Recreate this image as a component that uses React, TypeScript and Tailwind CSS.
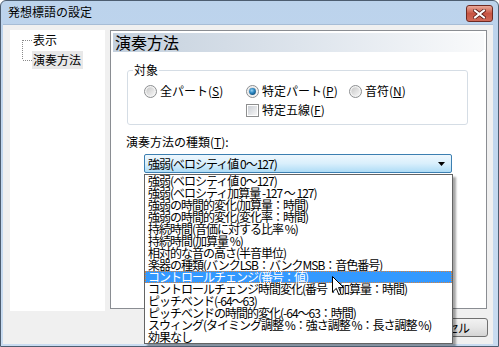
import React from "react";

const items = [
  "強弱(ベロシティ値 0〜127)",
  "強弱(ベロシティ加算量 -127 〜 127)",
  "強弱の時間的変化(加算量：時間)",
  "強弱の時間的変化(変化率：時間)",
  "持続時間(音価に対する比率 %)",
  "持続時間(加算量 %)",
  "相対的な音の高さ(半音単位)",
  "楽器の種類(バンクLSB：バンクMSB：音色番号)",
  "コントロールチェンジ(番号：値)",
  "コントロールチェンジ時間変化(番号：加算量：時間)",
  "ピッチベンド(-64〜63)",
  "ピッチベンドの時間的変化(-64〜63：時間)",
  "スウィング(タイミング調整 %：強さ調整 %：長さ調整 %)",
  "効果なし",
];

function Radio({ checked, id }: { checked?: boolean; id: string }) {
  return (
    <svg width="13" height="13" viewBox="0 0 13 13" className="shrink-0">
      <defs>
        <linearGradient id={id} x1="0" y1="0" x2="1" y2="1">
          <stop offset="0" stopColor="#c8c8c8" />
          <stop offset="1" stopColor="#f6f6f6" />
        </linearGradient>
        <radialGradient id={id + "b"} cx="0.4" cy="0.35" r="0.7">
          <stop offset="0" stopColor="#9ad4f5" />
          <stop offset="0.5" stopColor="#2e8ac4" />
          <stop offset="1" stopColor="#104e7c" />
        </radialGradient>
      </defs>
      <circle cx="6.5" cy="6.5" r="6" fill="#f3f3f3" stroke="#8c8e90" />
      <circle cx="6.5" cy="6.5" r="4.2" fill={`url(#${id})`} />
      {checked && <circle cx="6.5" cy="6.5" r="3.4" fill={`url(#${id}b)`} />}
    </svg>
  );
}

function Checkbox() {
  return (
    <div className="flex h-[13px] w-[13px] shrink-0 items-center justify-center border border-[#8e8f8f] bg-white">
      <div className="h-[9px] w-[9px] bg-gradient-to-br from-[#cbcfd5] to-[#f6f6f6]" />
    </div>
  );
}

function TreeLine({ first }: { first?: boolean }) {
  return (
    <svg width="10" height="20" viewBox="0 0 10 20" className="shrink-0">
      <g stroke="#8a8a8a" strokeDasharray="1 1">
        {first ? (
          <line x1="0.5" y1="10" x2="0.5" y2="20" />
        ) : (
          <line x1="0.5" y1="0" x2="0.5" y2="10" />
        )}
        <line x1="1" y1="10.5" x2="10" y2="10.5" />
      </g>
    </svg>
  );
}

export default function App() {
  return (
    <div className="relative flex h-[347px] w-[499px] flex-col overflow-hidden rounded-t-[6px] border border-[#4d5d70] bg-gradient-to-b from-[#bcd3ec] to-[#c9dcf1] font-['Noto_Sans_CJK_JP','Liberation_Sans',sans-serif] text-[12px] text-black">
      {/* title bar */}
      <div className="flex h-[23px] shrink-0 items-start justify-between pl-[7px] pr-[5px]">
        <span className="mt-[4px] leading-[14px]">発想標語の設定</span>
        <div className="mt-[4px] flex h-[17px] w-[27px] items-center justify-center rounded-[3px] border border-[#6e2a22] bg-gradient-to-b from-[#e9a99b] via-[#c75442] to-[#d06a58]">
          <svg width="13" height="10" viewBox="0 0 13 10">
            <g strokeLinecap="square">
              <path d="M2 1.5 L11 8.5 M11 1.5 L2 8.5" stroke="#5b1d16" strokeWidth="3.6" />
              <path d="M2 1.5 L11 8.5 M11 1.5 L2 8.5" stroke="#ffffff" strokeWidth="2" />
            </g>
          </svg>
        </div>
      </div>

      {/* client area */}
      <div className="ml-[2px] mr-[5px] flex h-[320px] flex-col border-t border-[#a7bdd6] bg-[#f0f0f0] pl-[7px] pt-[5px]">
        <div className="flex items-start gap-[5px]">
          {/* tree */}
          <div className="flex h-[281px] w-[95px] flex-col bg-white pl-[12px]">
            <div className="flex h-[20px] items-center">
              <TreeLine first />
              <span className="ml-[1px] leading-[14px]">表示</span>
            </div>
            <div className="flex h-[20px] items-center">
              <TreeLine />
              <span className="flex h-[18px] items-center bg-[#e8e8e8] pl-[1px] pr-[2px] leading-[14px]">
                演奏方法
              </span>
            </div>
          </div>

          {/* right panel */}
          <div className="flex h-[279px] w-[377px] flex-col border border-[#8a8d92] bg-white p-[2px]">
            <div className="flex h-[19px] items-center bg-gradient-to-r from-[#c4d0dd] via-[#dde4ec] to-[#f9fafb] pl-[2px] text-[16px] leading-[19px]">
              演奏方法
            </div>

            <fieldset className="ml-[14px] mr-[16px] mt-[12px] rounded-[3px] border border-[#d5dde5] pb-[7px]">
              <legend className="ml-[5px] px-[1px] leading-[12px]">対象</legend>
              <div className="mt-[8px] flex h-[14px] items-center pl-[16px]">
                <div className="flex w-[102px] items-center gap-[3px]">
                  <Radio id="r1" />
                  <span className="leading-[12px]">
                    全パート(<span className="underline">S</span>)
                  </span>
                </div>
                <div className="flex w-[103px] items-center gap-[3px]">
                  <Radio id="r2" checked />
                  <span className="leading-[12px]">
                    特定パート(<span className="underline">P</span>)
                  </span>
                </div>
                <div className="flex items-center gap-[3px]">
                  <Radio id="r3" />
                  <span className="leading-[12px]">
                    音符(<span className="underline">N</span>)
                  </span>
                </div>
              </div>
              <div className="mt-[5px] flex h-[14px] items-center gap-[3px] pl-[118px]">
                <Checkbox />
                <span className="leading-[12px]">
                  特定五線(<span className="underline">F</span>)
                </span>
              </div>
            </fieldset>

            <div className="ml-[13px] mt-[11px] leading-[12px]">
              演奏方法の種類(<span className="underline">T</span>):
            </div>

            <div className="ml-[31px] mt-[6px] flex h-[19px] w-[308px] items-center justify-between rounded-[2px] border border-[#3c7fb1] bg-gradient-to-b from-[#eef7fd] via-[#d9effc] to-[#aedcf6] pl-[3px] pr-[6px]">
              <span className="leading-[12px] tracking-[-1px]">強弱(ベロシティ値 0〜127)</span>
              <svg width="7" height="4" viewBox="0 0 7 4">
                <path d="M0 0 H7 L3.5 4 Z" fill="#000" />
              </svg>
            </div>
          </div>
        </div>

        {/* buttons */}
        <div className="mt-[7px] flex justify-end gap-[5px] pr-[5px]">
          <div className="flex h-[19px] w-[75px] items-center justify-center rounded-[3px] border border-[#707070] bg-gradient-to-b from-[#f2f2f2] via-[#e6e6e6] to-[#d4d4d4] leading-[12px]">
            OK
          </div>
          <div className="flex h-[19px] w-[75px] items-center justify-center rounded-[3px] border border-[#707070] bg-gradient-to-b from-[#f2f2f2] via-[#e6e6e6] to-[#d4d4d4] pr-[18px] leading-[12px] tracking-[-1px]">
            キャンセル
          </div>
        </div>
      </div>

      {/* open dropdown list */}
      <div className="absolute left-[143px] top-[173px] flex h-[170px] w-[309px] flex-col border border-[#646464] bg-white shadow-[3px_3px_2px_rgba(0,0,0,0.35)]">
        {items.map((t, i) => (
          <div
            key={i}
            className={
              i === 8
                ? "h-[12px] shrink-0 whitespace-nowrap bg-[#3399ff] pl-[3px] leading-[12px] tracking-[-1px] text-white outline-1 -outline-offset-1 outline-dotted outline-[#d9823b]"
                : "h-[12px] shrink-0 whitespace-nowrap pl-[3px] leading-[12px] tracking-[-1px]"
            }
          >
            {t}
          </div>
        ))}
      </div>

      {/* mouse cursor */}
      <svg
        className="absolute left-[331px] top-[275px]"
        width="13"
        height="20"
        viewBox="0 0 13 20"
      >
        <path
          d="M0.5 0.5 L0.5 16 L4.3 12.4 L6.8 18.5 L9 17.6 L6.6 11.6 L11.6 11.6 Z"
          fill="#fff"
          stroke="#000"
          strokeWidth="1"
          strokeLinejoin="round"
        />
      </svg>
    </div>
  );
}
